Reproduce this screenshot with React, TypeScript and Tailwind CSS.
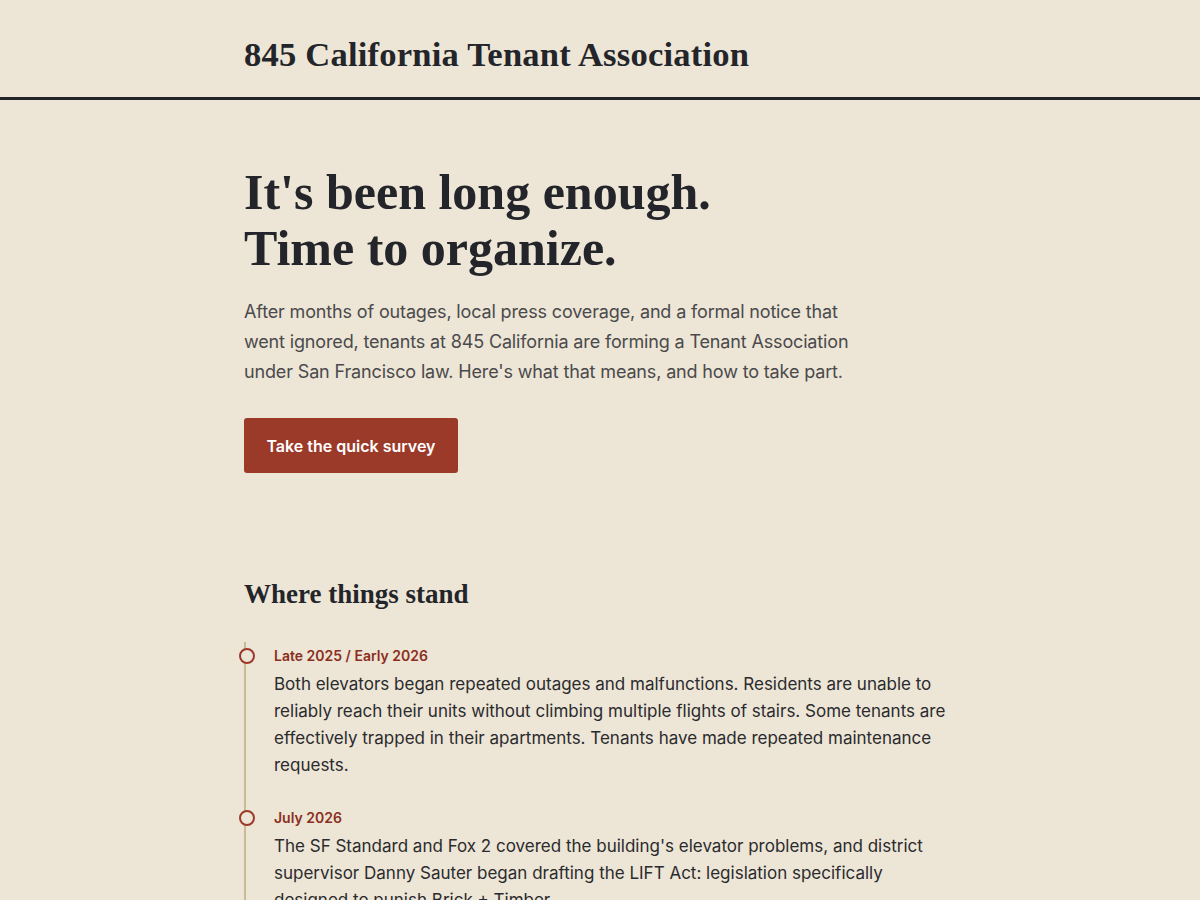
import React from "react";

const serif = { fontFamily: '"Liberation Serif", "DejaVu Serif", serif' };

const items = [
  {
    date: "Late 2025 / Early 2026",
    text: "Both elevators began repeated outages and malfunctions. Residents are unable to reliably reach their units without climbing multiple flights of stairs. Some tenants are effectively trapped in their apartments. Tenants have made repeated maintenance requests.",
  },
  {
    date: "July 2026",
    text: "The SF Standard and Fox 2 covered the building's elevator problems, and district supervisor Danny Sauter began drafting the LIFT Act: legislation specifically designed to punish Brick + Timber.",
  },
  {
    date: "August 2026",
    text: "Tenants sent a formal notice to management requesting repairs and a timeline. The notice went unanswered.",
  },
];

export default function App() {
  return (
    <div className="min-h-screen bg-[#ede5d5] text-[#23252a] font-['Inter',sans-serif]">
      <header className="border-b-[3px] border-[#23252a]">
        <div className="mx-auto max-w-3xl px-7 h-[97px] pt-[13px] flex items-center">
          <h1 className="text-[34.6px] font-bold tracking-[0.2px] text-[#23252a]" style={serif}>
            845 California Tenant Association
          </h1>
        </div>
      </header>
      <main className="mx-auto max-w-3xl px-7">
        <section className="pt-[64px] pb-[101px]">
          <h2 className="text-[50px] leading-[56px] font-bold text-[#23252a]" style={serif}>
            It's been long enough.
            <br />
            Time to organize.
          </h2>
          <p className="mt-[21px] max-w-[622px] text-[18px] leading-[30px] tracking-[-0.15px] text-[#4a4a4c]">
            After months of outages, local press coverage, and a formal notice that went ignored, tenants at 845 California are forming a Tenant Association under San Francisco law. Here's what that means, and how to take part.
          </p>
          <a
            href="#"
            className="mt-[31px] inline-flex items-center justify-center h-[55px] w-[214px] rounded-[3px] bg-[#9c3a2a] text-white text-[16px] font-semibold"
          >
            Take the quick survey
          </a>
        </section>
        <section>
          <h3 className="text-[27px] font-bold text-[#23252a]" style={serif}>
            Where things stand
          </h3>
          <ol className="mt-[27px] border-l-2 border-[#c9bb96] flex flex-col gap-[25px] pb-10">
            {items.map((it) => (
              <li key={it.date} className="relative pl-[28px] pt-[4px]">
                <span className="absolute left-[-7px] top-[6px] h-4 w-4 rounded-full border-2 border-[#9c3a2a] bg-[#ede5d5]" />
                <div className="text-[14px] leading-[20px] font-semibold text-[#8b2e20]">{it.date}</div>
                <p className="mt-[5px] max-w-[680px] text-[17px] leading-[27px] text-[#2a2b2e]">{it.text}</p>
              </li>
            ))}
          </ol>
        </section>
      </main>
    </div>
  );
}
